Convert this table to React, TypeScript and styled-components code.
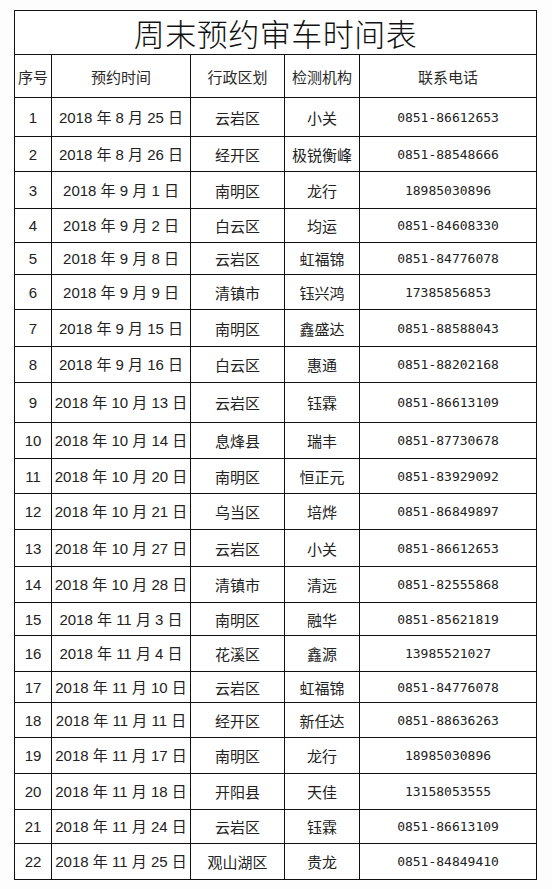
import React from "react";
import styled, { createGlobalStyle } from "styled-components";

const Global = createGlobalStyle`
  html, body { margin: 0; padding: 0; background: #ffffff; }
  body { font-family: "Liberation Sans", "Noto Sans CJK SC", sans-serif; color: #222; }
`;

const Page = styled.div`
  width: 552px;
  height: 889px;
  padding: 10px 0 0 14px;
  box-sizing: border-box;
  background: #fdfdfd;
`;

const Table = styled.table`
  border-collapse: collapse;
  table-layout: fixed;
  width: 522px;
  background: #fff;
`;

const Col = styled.col<{ $w: number }>`
  width: ${(p) => p.$w}px;
`;

const TitleCell = styled.th`
  border: 1.5px solid #111;
  height: 43px;
  padding: 0;
  line-height: 1;
  font-family: "Noto Sans CJK SC", sans-serif;
  font-weight: 300;
  font-size: 31px;
  letter-spacing: 0.5px;
  color: #111;
  text-align: center;
  vertical-align: middle;
`;

const HeadCell = styled.th`
  border: 1.5px solid #111;
  height: 42px;
  padding: 0;
  line-height: 1;
  font-family: "Noto Sans CJK SC", sans-serif;
  font-weight: 400;
  font-size: 15px;
  color: #2a2a2a;
  text-align: center;
  vertical-align: middle;
`;

const Row = styled.tr<{ $h: number }>`
  height: ${(p) => p.$h}px;
`;

const Cell = styled.td<{ $kind?: "num" | "date" | "cjk" | "phone" }>`
  border: 1.5px solid #111;
  padding: 0;
  line-height: 1;
  text-align: center;
  vertical-align: middle;
  white-space: nowrap;
  color: #222;
  font-size: ${(p) => (p.$kind === "phone" ? "13px" : "15px")};
  font-family: ${(p) =>
    p.$kind === "phone"
      ? '"DejaVu Sans Mono", "Liberation Mono", monospace'
      : p.$kind === "cjk"
      ? '"Noto Sans CJK SC", sans-serif'
      : '"Liberation Sans", "Noto Sans CJK SC", sans-serif'};
`;

type R = [string, string, string, string, number];

const rows: R[] = [
  ["2018 年 8 月 25 日", "云岩区", "小关", "0851-86612653", 39],
  ["2018 年 8 月 26 日", "经开区", "极锐衡峰", "0851-88548666", 35],
  ["2018 年 9 月 1 日", "南明区", "龙行", "18985030896", 37],
  ["2018 年 9 月 2 日", "白云区", "均运", "0851-84608330", 34],
  ["2018 年 9 月 8 日", "云岩区", "虹福锦", "0851-84776078", 32],
  ["2018 年 9 月 9 日", "清镇市", "钰兴鸿", "17385856853", 35],
  ["2018 年 9 月 15 日", "南明区", "鑫盛达", "0851-88588043", 37],
  ["2018 年 9 月 16 日", "白云区", "惠通", "0851-88202168", 36],
  ["2018 年 10 月 13 日", "云岩区", "钰霖", "0851-86613109", 40],
  ["2018 年 10 月 14 日", "息烽县", "瑞丰", "0851-87730678", 36],
  ["2018 年 10 月 20 日", "南明区", "恒正元", "0851-83929092", 35],
  ["2018 年 10 月 21 日", "乌当区", "培烨", "0851-86849897", 36],
  ["2018 年 10 月 27 日", "云岩区", "小关", "0851-86612653", 37],
  ["2018 年 10 月 28 日", "清镇市", "清远", "0851-82555868", 36],
  ["2018 年 11 月 3 日", "南明区", "融华", "0851-85621819", 33],
  ["2018 年 11 月 4 日", "花溪区", "鑫源", "13985521027", 36],
  ["2018 年 11 月 10 日", "云岩区", "虹福锦", "0851-84776078", 31],
  ["2018 年 11 月 11 日", "经开区", "新任达", "0851-88636263", 35],
  ["2018 年 11 月 17 日", "南明区", "龙行", "18985030896", 36],
  ["2018 年 11 月 18 日", "开阳县", "天佳", "13158053555", 36],
  ["2018 年 11 月 24 日", "云岩区", "钰霖", "0851-86613109", 34],
  ["2018 年 11 月 25 日", "观山湖区", "贵龙", "0851-84849410", 36],
];

export default function App() {
  return (
    <>
      <Global />
      <Page>
        <Table>
          <colgroup>
            <Col $w={37} />
            <Col $w={139} />
            <Col $w={94} />
            <Col $w={75} />
            <Col $w={177} />
          </colgroup>
          <thead>
            <tr>
              <TitleCell colSpan={5}>周末预约审车时间表</TitleCell>
            </tr>
            <tr>
              <HeadCell>序号</HeadCell>
              <HeadCell>预约时间</HeadCell>
              <HeadCell>行政区划</HeadCell>
              <HeadCell>检测机构</HeadCell>
              <HeadCell>联系电话</HeadCell>
            </tr>
          </thead>
          <tbody>
            {rows.map((r, i) => (
              <Row key={i} $h={r[4]}>
                <Cell $kind="num">{i + 1}</Cell>
                <Cell $kind="date">{r[0]}</Cell>
                <Cell $kind="cjk">{r[1]}</Cell>
                <Cell $kind="cjk">{r[2]}</Cell>
                <Cell $kind="phone">{r[3]}</Cell>
              </Row>
            ))}
          </tbody>
        </Table>
      </Page>
    </>
  );
}
